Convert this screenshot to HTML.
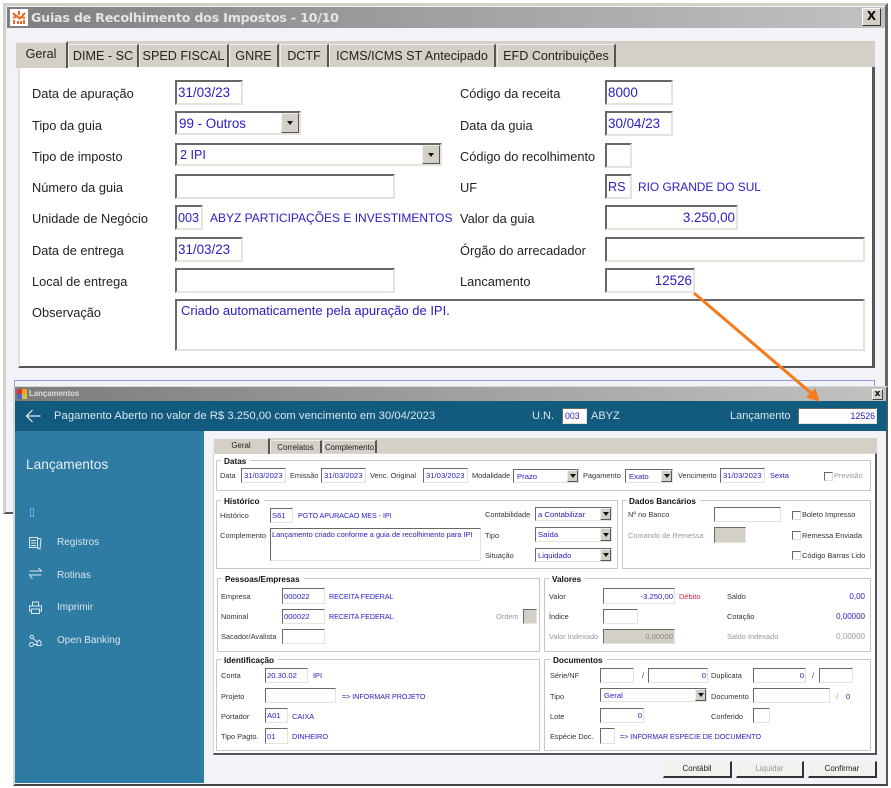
<!DOCTYPE html>
<html><head><meta charset="utf-8"><style>
html,body{margin:0;padding:0;background:#fff}
#r{position:relative;width:891px;height:788px;overflow:hidden;font-family:"Liberation Sans",sans-serif;background:#fff}
#r div,#r span{position:absolute;box-sizing:border-box}
.t{white-space:nowrap;transform:translateY(-50%);font-size:7.4px;color:#333;line-height:12px}
.v{color:#2a20c4}
.t.u{font-size:7.1px}
.g{color:#999}
.t.L{font-size:12.8px;color:#222;margin-top:.5px}
.t.B{font-size:12px;color:#2a20c4}
.t.h{font-weight:bold;font-size:8.2px;color:#111;background:#fff;padding:0 4px 0 3px;margin-top:.5px}
.i{background:#fff;border:2px solid;border-color:#686868 #e6e3dc #e6e3dc #686868;white-space:nowrap;overflow:hidden;font-size:7.7px;color:#2a20c4;display:flex;align-items:center;padding:0 1px}
.i.B{font-size:13.4px;color:#2a20c4}
.s{border-width:1.5px;}
.G{background:#d4d0c8}
#r .b{background:#d4d0c8;top:0;bottom:0;right:0;width:11px;border:1px solid;border-color:#eee #555 #555 #eee}
.b::after{content:"";position:absolute;left:50%;top:50%;margin:-2px 0 0 -3px;border:3px solid transparent;border-top:4px solid #111;border-bottom:0}
.gb{border:1px solid #c9c6c0;border-radius:1px}
.tab{background:#d4d0c8;border-top:1px solid #eee;border-left:1px solid #eee;border-right:2px solid #555;font-size:12.6px;color:#222;text-align:center;white-space:nowrap}
.tb{background:#d4d0c8;border-top:1px solid #eee;border-left:1px solid #eee;border-right:2px solid #555;font-size:7.9px;color:#222;text-align:center;white-space:nowrap}
.btn{background:#f2f1ee;border:1px solid;border-color:#f5f5f5 #333 #333 #f5f5f5;border-width:1px 2px 2px 1px;font-size:7.9px;color:#222;text-align:center;line-height:14px}
.c{background:#fff;border:1px solid;border-color:#666 #ddd #ddd #666;width:9px;height:9px}
.t.m{color:#d8e4ec;font-size:10px;margin-top:1px}
.t.w{color:#d8e6ee;font-size:11px}
</style></head><body><div id="r">

<!-- top window -->
<div style="left:3px;top:3px;width:885px;height:511px;background:#f1f3f9;border:3px solid #d4d0c8;border-right:3px solid #666;border-bottom:2px solid #555"></div>
<div style="left:7px;top:7px;width:878px;height:21px;background:linear-gradient(90deg,#7f7f7f,#c2c2c2)"></div>
<div style="left:10px;top:9px;width:18px;height:17px;background:#fff"></div>
<svg style="position:absolute;left:12px;top:10px" width="14" height="15" viewBox="0 0 14 15"><g stroke="#f0651f" stroke-width="2" fill="none"><path d="M1 3l3 3M7 1v4M13 3l-3 3M1 8l4-2 3 3M13 8l-4-1-2 2M2 14v-4M6 14v-3M9 14v-3M12 14v-4"/></g></svg>
<div class="t" style="left:31px;top:18px;font-size:12.7px;line-height:16px;font-family:'DejaVu Sans',sans-serif;font-weight:bold;color:#e4e4e4;letter-spacing:-.25px">Guias de Recolhimento dos Impostos - 10/10</div>
<div style="left:862px;top:8px;width:19px;height:18px;background:#d4d0c8;border:1px solid;border-color:#fff #333 #333 #fff;font:bold 12px/15px 'DejaVu Sans',sans-serif;color:#111;text-align:center">X</div>

<div style="left:15px;top:41px;width:860px;height:27px;background:#d4d0c8"></div>
<div style="left:18px;top:67px;width:857px;height:301px;background:#fff;border:2px solid #e4e1da;border-top:0;border-right:3px solid #555;border-bottom:2px solid #555"></div>
<div class="tab" style="left:15px;top:41px;width:53px;height:27px;line-height:23px;border-top:2px solid #eee;background:#d4d0c8">Geral</div>
<div class="tab" style="left:68px;top:44px;width:71px;height:23px;line-height:23px">DIME - SC</div>
<div class="tab" style="left:139px;top:44px;width:90px;height:23px;line-height:23px">SPED FISCAL</div>
<div class="tab" style="left:229px;top:44px;width:50px;height:23px;line-height:23px">GNRE</div>
<div class="tab" style="left:280px;top:44px;width:49px;height:23px;line-height:23px">DCTF</div>
<div class="tab" style="left:329px;top:44px;width:167px;height:23px;line-height:23px">ICMS/ICMS ST Antecipado</div>
<div class="tab" style="left:497px;top:44px;width:119px;height:23px;line-height:23px">EFD Contribuições</div>

<div class="t L" style="left:32px;top:93px">Data de apuração</div>
<div class="t L" style="left:32px;top:125px">Tipo da guia</div>
<div class="t L" style="left:32px;top:156px">Tipo de imposto</div>
<div class="t L" style="left:32px;top:187px">Número da guia</div>
<div class="t L" style="left:32px;top:218px">Unidade de Negócio</div>
<div class="t L" style="left:32px;top:250px">Data de entrega</div>
<div class="t L" style="left:32px;top:281px">Local de entrega</div>
<div class="t L" style="left:32px;top:312px">Observação</div>

<div class="i B" style="left:175px;top:80px;width:68px;height:25px">31/03/23</div>
<div class="i B" style="left:175px;top:111px;width:126px;height:24px;padding-left:2px">99 - Outros<span class="b" style="width:18px;right:0"></span></div>
<div class="i B" style="left:175px;top:143px;width:267px;height:23px;padding-left:3px;font-size:12.6px">2 IPI<span class="b" style="width:18px;right:0"></span></div>
<div class="i" style="left:175px;top:174px;width:220px;height:25px"></div>
<div class="i B" style="left:175px;top:205px;width:28px;height:25px;font-size:12.6px">003</div>
<div class="t B" style="left:210px;top:218px">ABYZ PARTICIPAÇÕES E INVESTIMENTOS</div>
<div class="i B" style="left:175px;top:237px;width:68px;height:25px">31/03/23</div>
<div class="i" style="left:175px;top:268px;width:220px;height:25px"></div>
<div class="i B" style="left:175px;top:299px;width:690px;height:52px;align-items:flex-start;padding:2px 4px;font-size:13px">Criado automaticamente pela apuração de IPI.</div>

<div class="t L" style="left:460px;top:93px">Código da receita</div>
<div class="t L" style="left:460px;top:125px">Data da guia</div>
<div class="t L" style="left:460px;top:156px">Código do recolhimento</div>
<div class="t L" style="left:460px;top:187px">UF</div>
<div class="t L" style="left:460px;top:218px">Valor da guia</div>
<div class="t L" style="left:460px;top:250px">Órgão do arrecadador</div>
<div class="t L" style="left:460px;top:281px">Lancamento</div>

<div class="i B" style="left:605px;top:80px;width:68px;height:25px">8000</div>
<div class="i B" style="left:605px;top:111px;width:68px;height:25px">30/04/23</div>
<div class="i" style="left:605px;top:143px;width:27px;height:25px"></div>
<div class="i B" style="left:605px;top:174px;width:27px;height:25px;font-size:12.6px">RS</div>
<div class="t B" style="left:638px;top:187px;font-size:11.9px">RIO GRANDE DO SUL</div>
<div class="i B" style="left:605px;top:205px;width:133px;height:25px;justify-content:flex-end;padding-right:1px">3.250,00</div>
<div class="i" style="left:605px;top:237px;width:260px;height:25px"></div>
<div class="i B" style="left:605px;top:268px;width:90px;height:25px;justify-content:flex-end">12526</div>

<!-- lower window -->
<div style="left:14px;top:380px;width:861px;height:10px;border:1px solid #9a98dc;border-bottom:0"></div>
<div style="left:13px;top:386px;width:875px;height:400px;background:#f1f3f9;border:2px solid #d8d6d0;border-right:2px solid #555;border-bottom:2px solid #444"></div>
<div style="left:15px;top:387px;width:871px;height:14px;background:linear-gradient(90deg,#7c7c7c,#c2c2c2)"></div>
<div style="left:17px;top:389px;width:5px;height:5px;background:#d33"></div>
<div style="left:22px;top:389px;width:5px;height:5px;background:#eda528"></div>
<div style="left:17px;top:394px;width:5px;height:5px;background:#4a6bc0"></div>
<div style="left:22px;top:394px;width:5px;height:5px;background:#d8c040"></div>
<div class="t" style="left:29px;top:393.5px;font-weight:bold;font-size:7.8px;color:#ddd">Lançamentos</div>
<div style="left:872px;top:389px;width:11px;height:11px;background:#d4d0c8;border:1px solid;border-color:#fff #444 #444 #fff;font:bold 9px/9px 'DejaVu Sans',sans-serif;color:#111;text-align:center">x</div>

<div style="left:15px;top:401px;width:871px;height:30px;background:#125a7e"></div>
<svg style="position:absolute;left:25px;top:408px" width="16" height="16" viewBox="0 0 16 16" fill="none" stroke="#e8f0f4" stroke-width="1.2"><path d="M1.5 8h14M7.5 2L1.5 8l6 6"/></svg>
<div class="t w" style="left:54px;top:416px;font-size:11.3px">Pagamento Aberto no valor de R$ 3.250,00 com vencimento em 30/04/2023</div>
<div class="t w" style="left:532px;top:416px">U.N.</div>
<div class="i" style="left:562px;top:408px;width:25px;height:16px;font-size:8.8px;border-width:1.5px;padding-left:2px">003</div>
<div class="t w" style="left:591px;top:416px">ABYZ</div>
<div class="t w" style="left:730px;top:416px">Lançamento</div>
<div class="i" style="left:798px;top:408px;width:79px;height:16px;font-size:8.8px;border-width:1.5px;justify-content:flex-end">12526</div>

<div style="left:15px;top:431px;width:189px;height:352px;background:#2e7ba3"></div>
<div class="t" style="left:26px;top:465px;font-size:13.7px;color:#e6eff4;line-height:18px">Lançamentos</div>
<div style="left:30px;top:508px;width:4px;height:9px;border:1px solid #62aee8"></div>
<svg style="position:absolute;left:28px;top:535px" width="15" height="115" viewBox="0 0 15 115" fill="none" stroke="#dce8ef" stroke-width="1">
<path d="M1.5 2.500h8v10h-8zM3 5.500h5M3 8h5M3 10.500h5M9.500 3.500l3.500.5-1 10-3.500-1.500"/>
<path d="M1.500 36h12l-3-3M13.500 40h-12l3 4"/>
<path d="M4.500 71v-4h6v4M3.500 76h-2v-5h12v5h-2M3.500 74h8v4.500h-8z"/>
<path d="M5.200 103.500l3.800 3.500M5.500 109.500h3.500M9 110.500v-3.500l2-2 2 2v3.500z"/><circle cx="3.800" cy="102" r="1.700"/><circle cx="3.500" cy="109.500" r="2"/>
</svg>
<div class="t m" style="left:57px;top:541.500px">Registros</div>
<div class="t m" style="left:57px;top:574.500px">Rotinas</div>
<div class="t m" style="left:57px;top:607px">Imprimir</div>
<div class="t m" style="left:57px;top:640px">Open Banking</div>

<!-- panel -->
<div style="left:213px;top:438px;width:664px;height:16px;background:#d4d0c8"></div>
<div style="left:213px;top:453px;width:664px;height:302px;background:#fff;border:1px solid #ddd9d2;border-right:2px solid #555;border-bottom:2px solid #555"></div>
<div class="tb" style="left:213px;top:438px;width:57px;height:16px;line-height:14px">Geral</div>
<div class="tb" style="left:270px;top:440px;width:52px;height:13px;line-height:13px">Correlatos</div>
<div class="tb" style="left:323px;top:440px;width:54px;height:13px;line-height:13px">Complemento</div>

<!-- groups -->
<div class="gb" style="left:216px;top:460px;width:655px;height:31px"></div>
<div class="t h" style="left:221px;top:461px">Datas</div>
<div class="t" style="left:220px;top:476px">Data</div>
<div class="i s" style="left:241px;top:468px;width:45px;height:15px;padding-left:2px">31/03/2023</div>
<div class="t" style="left:290px;top:476px">Emissão</div>
<div class="i s" style="left:321px;top:468px;width:45px;height:15px;padding-left:2px">31/03/2023</div>
<div class="t" style="left:370px;top:476px">Venc. Original</div>
<div class="i s" style="left:423px;top:468px;width:45px;height:15px;padding-left:2px">31/03/2023</div>
<div class="t" style="left:472px;top:476px">Modalidade</div>
<div class="i s" style="left:513px;top:469px;width:66px;height:14px;padding-left:3px">Prazo<span class="b"></span></div>
<div class="t" style="left:583px;top:476px">Pagamento</div>
<div class="i s" style="left:625px;top:469px;width:48px;height:14px;padding-left:3px">Exato<span class="b"></span></div>
<div class="t" style="left:678px;top:476px">Vencimento</div>
<div class="i s" style="left:720px;top:468px;width:45px;height:15px;padding-left:2px">31/03/2023</div>
<div class="t v" style="left:770px;top:476px">Sexta</div>
<div class="c G" style="left:824px;top:472px"></div>
<div class="t g" style="left:834px;top:476px">Previsão</div>

<div class="gb" style="left:216px;top:500px;width:402px;height:69px"></div>
<div class="t h" style="left:221px;top:501px">Histórico</div>
<div class="t" style="left:220px;top:516px">Histórico</div>
<div class="i s" style="left:270px;top:508px;width:23px;height:15px">S61</div>
<div class="t v u" style="left:298px;top:516px">PGTO APURACAO MES - IPI</div>
<div class="t" style="left:220px;top:536px">Complemento</div>
<div class="i s" style="left:270px;top:528px;width:211px;height:33px;align-items:flex-start;padding:1px 1px;font-size:7.400px">Lançamento criado conforme a guia de recolhimento para IPI</div>
<div class="t" style="left:485px;top:515px">Contabilidade</div>
<div class="i s" style="left:535px;top:507px;width:77px;height:14px;padding-left:2px">a Contabilizar<span class="b"></span></div>
<div class="t" style="left:485px;top:536px">Tipo</div>
<div class="i s" style="left:535px;top:527px;width:77px;height:15px;padding-left:2px">Saída<span class="b"></span></div>
<div class="t" style="left:485px;top:556px">Situação</div>
<div class="i s" style="left:535px;top:548px;width:77px;height:14px;padding-left:2px">Liquidado<span class="b"></span></div>

<div class="gb" style="left:622px;top:500px;width:249px;height:69px"></div>
<div class="t h" style="left:626px;top:501px">Dados Bancários</div>
<div class="t" style="left:628px;top:515px">Nº no Banco</div>
<div class="i s" style="left:714px;top:507px;width:67px;height:15px"></div>
<div class="t g" style="left:628px;top:535.500px">Comando de Remessa</div>
<div class="i s G" style="left:714px;top:527px;width:32px;height:16px"></div>
<div class="c" style="left:792px;top:511px"></div>
<div class="t" style="left:802px;top:515px">Boleto Impresso</div>
<div class="c" style="left:792px;top:531px"></div>
<div class="t" style="left:802px;top:535.500px">Remessa Enviada</div>
<div class="c" style="left:792px;top:551px"></div>
<div class="t" style="left:802px;top:556px">Código Barras Lido</div>

<div class="gb" style="left:217px;top:578px;width:323px;height:74px"></div>
<div class="t h" style="left:222px;top:579px">Pessoas/Empresas</div>
<div class="t" style="left:221px;top:597px">Empresa</div>
<div class="i s" style="left:282px;top:588px;width:43px;height:16px">000022</div>
<div class="t v u" style="left:329px;top:597px">RECEITA FEDERAL</div>
<div class="t" style="left:221px;top:617px">Nominal</div>
<div class="i s" style="left:282px;top:609px;width:43px;height:15px">000022</div>
<div class="t v u" style="left:329px;top:617px">RECEITA FEDERAL</div>
<div class="t g" style="left:496px;top:617px">Ordem</div>
<div class="i s G" style="left:523px;top:609px;width:14px;height:15px"></div>
<div class="t" style="left:221px;top:637px">Sacador/Avalista</div>
<div class="i s" style="left:282px;top:629px;width:43px;height:15px"></div>

<div class="gb" style="left:544px;top:578px;width:327px;height:74px"></div>
<div class="t h" style="left:549px;top:579px">Valores</div>
<div class="t" style="left:549px;top:597px">Valor</div>
<div class="i s" style="left:603px;top:588px;width:72px;height:16px;justify-content:flex-end">-3.250,00</div>
<div class="t" style="left:679px;top:597px;color:#e8203c">Débito</div>
<div class="t" style="left:727px;top:597px">Saldo</div>
<div class="t v" style="right:26px;top:597px;font-size:8px">0,00</div>
<div class="t" style="left:549px;top:617px">Índice</div>
<div class="i s" style="left:603px;top:609px;width:35px;height:15px"></div>
<div class="t" style="left:727px;top:617px">Cotação</div>
<div class="t v" style="right:26px;top:617px;font-size:8px">0,00000</div>
<div class="t g" style="left:549px;top:637px">Valor Indexado</div>
<div class="i s G" style="left:603px;top:629px;width:72px;height:15px;justify-content:flex-end;color:#888">0,00000</div>
<div class="t g" style="left:727px;top:637px">Saldo Indexado</div>
<div class="t g" style="right:26px;top:637px;font-size:8px">0,00000</div>

<div class="gb" style="left:216px;top:659px;width:324px;height:92px"></div>
<div class="t h" style="left:221px;top:660px">Identificação</div>
<div class="t" style="left:221px;top:676px">Conta</div>
<div class="i s" style="left:265px;top:668px;width:43px;height:15px">20.30.02</div>
<div class="t v" style="left:313px;top:676px">IPI</div>
<div class="t" style="left:221px;top:696.500px">Projeto</div>
<div class="i s" style="left:265px;top:688px;width:71px;height:15px"></div>
<div class="t v u" style="left:342px;top:696.500px">=&gt; INFORMAR PROJETO</div>
<div class="t" style="left:221px;top:717px">Portador</div>
<div class="i s" style="left:265px;top:708px;width:23px;height:15px">A01</div>
<div class="t v" style="left:292px;top:717px">CAIXA</div>
<div class="t" style="left:221px;top:737px">Tipo Pagto.</div>
<div class="i s" style="left:265px;top:728px;width:23px;height:16px">01</div>
<div class="t v" style="left:292px;top:737px">DINHEIRO</div>

<div class="gb" style="left:544px;top:659px;width:327px;height:92px"></div>
<div class="t h" style="left:550px;top:660px">Documentos</div>
<div class="t" style="left:550px;top:676px">Série/NF</div>
<div class="i s" style="left:600px;top:668px;width:34px;height:15px"></div>
<div class="t" style="left:642px;top:676px">/</div>
<div class="i s" style="left:648px;top:668px;width:60px;height:15px;justify-content:flex-end">0</div>
<div class="t" style="left:711px;top:676px">Duplicata</div>
<div class="i s" style="left:753px;top:668px;width:53px;height:15px;justify-content:flex-end">0</div>
<div class="t" style="left:812px;top:676px">/</div>
<div class="i s" style="left:819px;top:668px;width:34px;height:15px"></div>
<div class="t" style="left:550px;top:696.500px">Tipo</div>
<div class="i s" style="left:600px;top:688px;width:107px;height:14px;padding-left:3px">Geral<span class="b"></span></div>
<div class="t" style="left:711px;top:696.500px">Documento</div>
<div class="i s" style="left:753px;top:688px;width:77px;height:15px"></div>
<div class="t g" style="left:836px;top:696.500px">/</div>
<div class="t v" style="left:846px;top:696.500px">0</div>
<div class="t" style="left:550px;top:717px">Lote</div>
<div class="i s" style="left:600px;top:708px;width:44px;height:15px;justify-content:flex-end">0</div>
<div class="t" style="left:711px;top:717px">Conferido</div>
<div class="i s" style="left:753px;top:708px;width:17px;height:15px"></div>
<div class="t" style="left:550px;top:737px">Espécie Doc.</div>
<div class="i s" style="left:600px;top:728px;width:15px;height:16px"></div>
<div class="t v u" style="left:620px;top:737px">=&gt; INFORMAR ESPECIE DE DOCUMENTO</div>

<div class="btn" style="left:663px;top:761px;width:69px;height:17px">Contábil</div>
<div class="btn" style="left:736px;top:761px;width:68px;height:17px;color:#999">Liquidar</div>
<div class="btn" style="left:808px;top:761px;width:69px;height:17px">Confirmar</div>

<!-- arrow -->
<svg style="position:absolute;left:0;top:0" width="891" height="788" viewBox="0 0 891 788"><path d="M694 293L811 393" stroke="#f57a1c" stroke-width="3" fill="none"/><path d="M819 401L807 397 815 389Z" fill="#f57a1c" stroke="#f57a1c"/></svg>
</div></body></html>
